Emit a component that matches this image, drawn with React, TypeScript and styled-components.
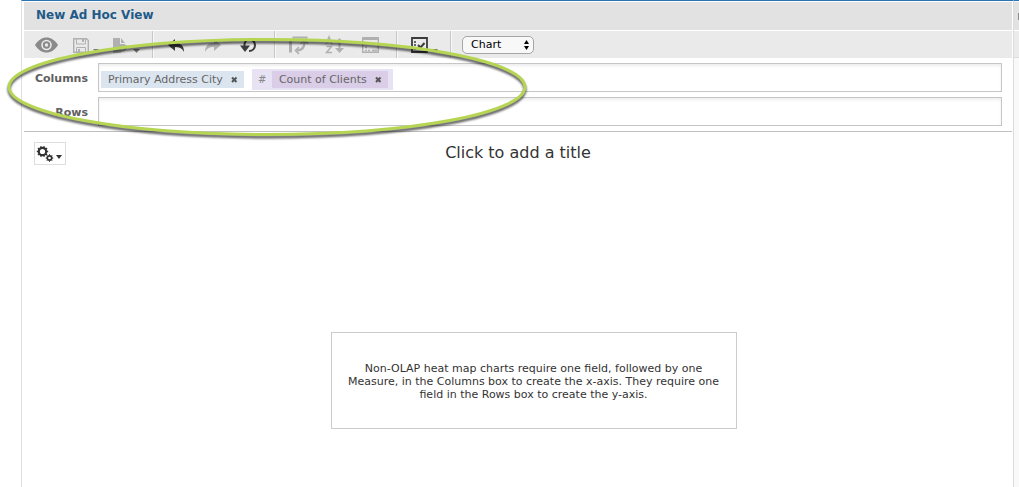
import React from "react";
import styled, { createGlobalStyle } from "styled-components";

const GlobalStyle = createGlobalStyle`
  * { box-sizing: border-box; }
  body {
    margin: 0;
    background: #fff;
    color: #333;
    font: 11px/13px Verdana, "DejaVu Sans", sans-serif;
  }
`;

const Page = styled.div`
  position: relative;
  display: flex;
  min-height: 100vh;
  padding-left: 21px;
  overflow: hidden;
`;

const ViewPanel = styled.main`
  flex: 1;
  min-width: 0;
  padding: 1px 1px 0 2px;
  border-top: 1px solid #2a74b2;
  border-left: 1px solid #e0e0e0;
`;

const SidePanel = styled.aside`
  flex: none;
  width: 6px;
  padding-top: 1px;
  border-top: 1px solid #2a74b2;
  border-left: 1px solid #dcdcdc;
  background: #f9f9f9;
`;

const SideHeader = styled.div`
  display: flex;
  align-items: center;
  justify-content: flex-end;
  height: 29px;
  background: #e2e2e2;
  border-bottom: 1px solid #fff;
`;

const CollapseHandle = styled.button`
  width: 1px;
  height: 7px;
  padding: 0;
  border: 0;
  background: #8c8c8c;
`;

const SideToolbar = styled.div`
  height: 27px;
  background: #ebebeb;
  border-bottom: 1px solid #dcdcdc;
`;

const Header = styled.header`
  display: flex;
  align-items: center;
  height: 28px;
  padding: 0 12px 2px;
  background: #e2e2e2;
`;

const ViewName = styled.h1`
  margin: 0;
  color: #215a88;
  font-size: 12px;
  line-height: 16px;
  font-weight: bold;
`;

const Toolbar = styled.div`
  display: flex;
  align-items: center;
  height: 27px;
  margin-top: 1px;
  background: #eaeaea;
`;

const ToolGroup = styled.div<{ $first?: boolean }>`
  display: flex;
  gap: 12px;
  padding: 0 12px 0 ${(p) => (p.$first ? 10 : 13)}px;
  border-right: 1px solid #c6c6c6;
  box-shadow: 1px 0 0 #f8f8f8;
`;

const ToolButton = styled.button<{ $width: number; $dim?: boolean }>`
  display: block;
  width: ${(p) => p.$width}px;
  height: 27px;
  padding: 0;
  border: 0;
  background: none;
  color: ${(p) => (p.$dim ? "#b0b0b0" : "#3c3c3c")};

  svg { display: block; }
`;

const SelectWrap = styled.div`
  position: relative;
  margin-left: 11px;
  height: 18px;

  svg {
    position: absolute;
    right: 4px;
    top: 4px;
    pointer-events: none;
  }
`;

const ChartSelect = styled.select`
  appearance: none;
  display: block;
  width: 72px;
  height: 18px;
  padding: 0 16px 0 8px;
  border: 1px solid #a6a6a6;
  border-radius: 5px;
  background: #f8f8f8;
  color: #000;
  font: 11px/16px Verdana, "DejaVu Sans", sans-serif;
`;

const Fields = styled.section`
  display: grid;
  gap: 5px;
  padding: 5px 10px 5px 0;
  border-bottom: 1px solid #c0c0c0;
`;

const FieldRow = styled.div`
  display: grid;
  grid-template-columns: 64px 1fr;
  column-gap: 10px;
  align-items: center;
`;

const FieldLabel = styled.span`
  padding-top: 2px;
  color: #606060;
  font-weight: bold;
  text-align: right;
`;

const DropBox = styled.div`
  display: flex;
  align-items: center;
  gap: 8px;
  height: 29px;
  padding: 3px 2px 0;
  border: 1px solid #c6c6c6;
  box-shadow: inset 0 2px 3px #eee;
`;

const Chip = styled.span<{ $measure?: boolean }>`
  display: flex;
  align-items: center;
  height: 17px;
  padding: 0 6px 0 7px;
  background: ${(p) => (p.$measure ? "#d9cde7" : "#dbe5ef")};
  color: #666;
`;

const MeasureChip = styled.span`
  display: flex;
  align-items: center;
  height: 21px;
  padding: 0 5px 0 6px;
  background: #e8e3f4;
  color: #888;
`;

const MeasureMark = styled.span`
  width: 14px;
  font-size: 10px;
`;

const RemoveButton = styled.button`
  display: block;
  width: 7px;
  height: 7px;
  margin-left: 8px;
  padding: 0;
  border: 0;
  background: none;
  color: #555;

  svg { display: block; }
`;

const Canvas = styled.section`
  display: grid;
  grid-template-columns: 32px 1fr 32px;
  padding: 10px 10px 0;
`;

const OptionsButton = styled.button`
  width: 32px;
  height: 23px;
  padding: 0;
  border: 1px solid #dedede;
  background: #fff;
  color: #333;

  svg { display: block; }
`;

const TitleButton = styled.button`
  justify-self: center;
  height: 22px;
  padding: 0;
  border: 0;
  background: none;
  color: #333;
  font: 16px/22px Verdana, "DejaVu Sans", sans-serif;
`;

const ChartArea = styled.div`
  display: flex;
  justify-content: center;
  padding: 167px 0 24px 31px;
`;

const Message = styled.p`
  width: 406px;
  max-width: 100%;
  margin: 0;
  padding: 29px 12px 27px;
  border: 1px solid #ccc;
  color: #333;
  text-align: center;
`;

const Highlight = styled.svg`
  position: absolute;
  left: 0;
  top: 32px;
  pointer-events: none;
`;

type ToolProps = { label: string; width?: number; dim?: boolean; children: React.ReactNode };

const Tool = ({ label, width = 24, dim, children }: ToolProps) => (
  <ToolButton type="button" aria-label={label} $width={width} $dim={dim}>
    <svg width={width} height="27" viewBox={`0 0 ${width} 27`} fill="none" stroke="currentColor">
      {children}
    </svg>
  </ToolButton>
);

const Remove = ({ label }: { label: string }) => (
  <RemoveButton type="button" aria-label={label}>
    <svg width="7" height="7" viewBox="0 0 7 7" stroke="currentColor" strokeWidth="2">
      <path d="M1 1.5L5.5 6M5.5 1.5L1 6" />
    </svg>
  </RemoveButton>
);

const gearTeeth = (cx: number, cy: number, r: number, n: number) =>
  Array.from({ length: n }, (_, i) => {
    const a = (i * 2 * Math.PI) / n;
    return `M${cx + (r - 1) * Math.cos(a)} ${cy + (r - 1) * Math.sin(a)}L${cx + (r + 1.2) * Math.cos(a)} ${cy + (r + 1.2) * Math.sin(a)}`;
  }).join("");

export default function App() {
  return (
    <>
      <GlobalStyle />
      <Page>
        <ViewPanel>
          <Header>
            <ViewName>New Ad Hoc View</ViewName>
          </Header>
          <Toolbar role="toolbar" aria-label="View tools">
            <ToolGroup $first>
              <Tool label="Preview" width={26}>
                <path d="M1 14C7 4 18 4 24 14C18 24 7 24 1 14Z" fill="#8a8a8a" stroke="none" />
                <circle cx="12.5" cy="14" r="4.5" fill="#8a8a8a" stroke="#eaeaea" strokeWidth="1.6" />
                <circle cx="12.5" cy="14" r="1.7" fill="#eaeaea" stroke="none" />
              </Tool>
              <Tool label="Save" width={28} dim>
                <path d="M1.7 7.7H14.5L16.3 9.5V21.3H1.7Z" strokeWidth="1.4" />
                <path d="M4.5 8V13H13.5V8M4.5 21V16.5H13.5V21" />
                <path d="M10 8h2v3h-2zM6 18h2v3H6z" fill="currentColor" stroke="none" />
                <path d="M21 18h6l-3 3z" fill="#777" stroke="none" />
              </Tool>
              <Tool label="Export" width={28} dim>
                <path d="M1 7H8V13H13V16L9 18V22H1Z" fill="currentColor" stroke="none" />
                <path d="M9 7L13 12H9Z" fill="currentColor" stroke="none" />
                <path d="M9 20C13 20 14 18 14 14" strokeWidth="2" />
                <path d="M21 18h7l-3.5 4z" fill="#777" stroke="none" />
              </Tool>
            </ToolGroup>
            <ToolGroup>
              <Tool label="Undo">
                <path d="M2 14L9 8V12C15 12 18 15 18 21C16 17 13 16 9 16V20Z" fill="currentColor" stroke="none" />
              </Tool>
              <Tool label="Redo" dim>
                <path d="M19 14L12 8V12C6 12 3 15 3 21C5 17 8 16 12 16V20Z" fill="currentColor" stroke="none" />
              </Tool>
              <Tool label="Reset">
                <path d="M8 9.5C12 7 17 9.5 17 14C17 17.5 14.5 20 11 20" strokeWidth="2" />
                <path d="M2 14.5H12L7 21Z" fill="currentColor" stroke="none" />
                <path d="M6.5 16C6 12 7 10.5 9 9" strokeWidth="2" />
              </Tool>
            </ToolGroup>
            <ToolGroup>
              <Tool label="Switch groups" dim>
                <path d="M2.5 9V21.5" strokeWidth="3" />
                <path d="M5.5 10V6.5H18.5V10" strokeWidth="2" />
                <path d="M9 19.5C14 19.5 16.5 17 16.5 11" strokeWidth="2.4" />
                <path d="M12.5 13L16.5 9L20 13M11 16L7.5 19.5L11 23" strokeWidth="1.6" />
              </Tool>
              <Tool label="Sort" dim>
                <path d="M2 13L5 6L8 13M3 11H7M2.5 15.5H7.5L2.5 21.5H8" strokeWidth="1.5" />
                <path d="M15.5 9V20" strokeWidth="2" />
                <path d="M11 12L15.5 7L20 12ZM11 17L15.5 22L20 17Z" fill="currentColor" stroke="none" />
              </Tool>
              <Tool label="Input controls" dim>
                <path d="M2.7 6.7H18.3V21.3H2.7Z" strokeWidth="1.4" />
                <path d="M3 8H18" strokeWidth="2" />
                <path d="M5 16.5h2M5 19.5h2M8 19.5h2M12 19.5h5" strokeWidth="1.4" />
              </Tool>
            </ToolGroup>
            <ToolGroup>
              <Tool label="Page options" width={28}>
                <path d="M2 7H17V21H2Z" strokeWidth="1.8" />
                <path d="M4 11h2M4 14h2M4 18h2" strokeWidth="1.6" />
                <path d="M8 14L10.5 16.5L14.5 12" strokeWidth="2" />
                <path d="M22 18h6l-3 3z" fill="#555" stroke="none" />
              </Tool>
            </ToolGroup>
            <SelectWrap>
              <ChartSelect aria-label="Visualization type" defaultValue="Chart">
                <option>Chart</option>
              </ChartSelect>
              <svg width="7" height="10" viewBox="0 0 7 10" fill="#000" aria-hidden="true">
                <path d="M3.5 0L6 4H1ZM3.5 10L6 6H1Z" />
              </svg>
            </SelectWrap>
          </Toolbar>
          <Fields>
            <FieldRow>
              <FieldLabel id="columns">Columns</FieldLabel>
              <DropBox role="group" aria-labelledby="columns">
                <Chip>
                  Primary Address City
                  <Remove label="Remove Primary Address City" />
                </Chip>
                <MeasureChip>
                  <MeasureMark>#</MeasureMark>
                  <Chip $measure>
                    Count of Clients
                    <Remove label="Remove Count of Clients" />
                  </Chip>
                </MeasureChip>
              </DropBox>
            </FieldRow>
            <FieldRow>
              <FieldLabel id="rows">Rows</FieldLabel>
              <DropBox role="group" aria-labelledby="rows" />
            </FieldRow>
          </Fields>
          <Canvas>
            <OptionsButton type="button" aria-label="Chart options">
              <svg width="30" height="21" viewBox="0 0 30 21" fill="none" stroke="currentColor">
                <circle cx="7.5" cy="8.5" r="3.7" strokeWidth="2.2" />
                <path d={gearTeeth(7.5, 8.5, 4.5, 10)} strokeWidth="1.3" />
                <circle cx="14.5" cy="15" r="2.2" strokeWidth="1.7" />
                <path d={gearTeeth(14.5, 15, 2.6, 8)} />
                <path d="M21 12h6L24 16z" fill="currentColor" stroke="none" />
              </svg>
            </OptionsButton>
            <TitleButton type="button">Click to add a title</TitleButton>
          </Canvas>
          <ChartArea>
            <Message>
              Non-OLAP heat map charts require one field, followed by one Measure, in the Columns box to
              create the x-axis. They require one field in the Rows box to create the y-axis.
            </Message>
          </ChartArea>
        </ViewPanel>
        <SidePanel aria-label="Filters">
          <SideHeader>
            <CollapseHandle type="button" aria-label="Expand filters" />
          </SideHeader>
          <SideToolbar />
        </SidePanel>
        <Highlight width="536" height="112" viewBox="0 32 536 112" fill="none" aria-hidden="true">
          <defs>
            <filter id="soft" x="-5%" y="-10%" width="110%" height="120%">
              <feGaussianBlur stdDeviation="1" />
            </filter>
          </defs>
          <ellipse cx="267" cy="89.5" rx="258" ry="47.5" stroke="#000" strokeOpacity="0.65" strokeWidth="3" filter="url(#soft)" />
          <ellipse cx="267" cy="87" rx="258" ry="47.5" stroke="#b5d553" strokeWidth="3" />
        </Highlight>
      </Page>
    </>
  );
}
